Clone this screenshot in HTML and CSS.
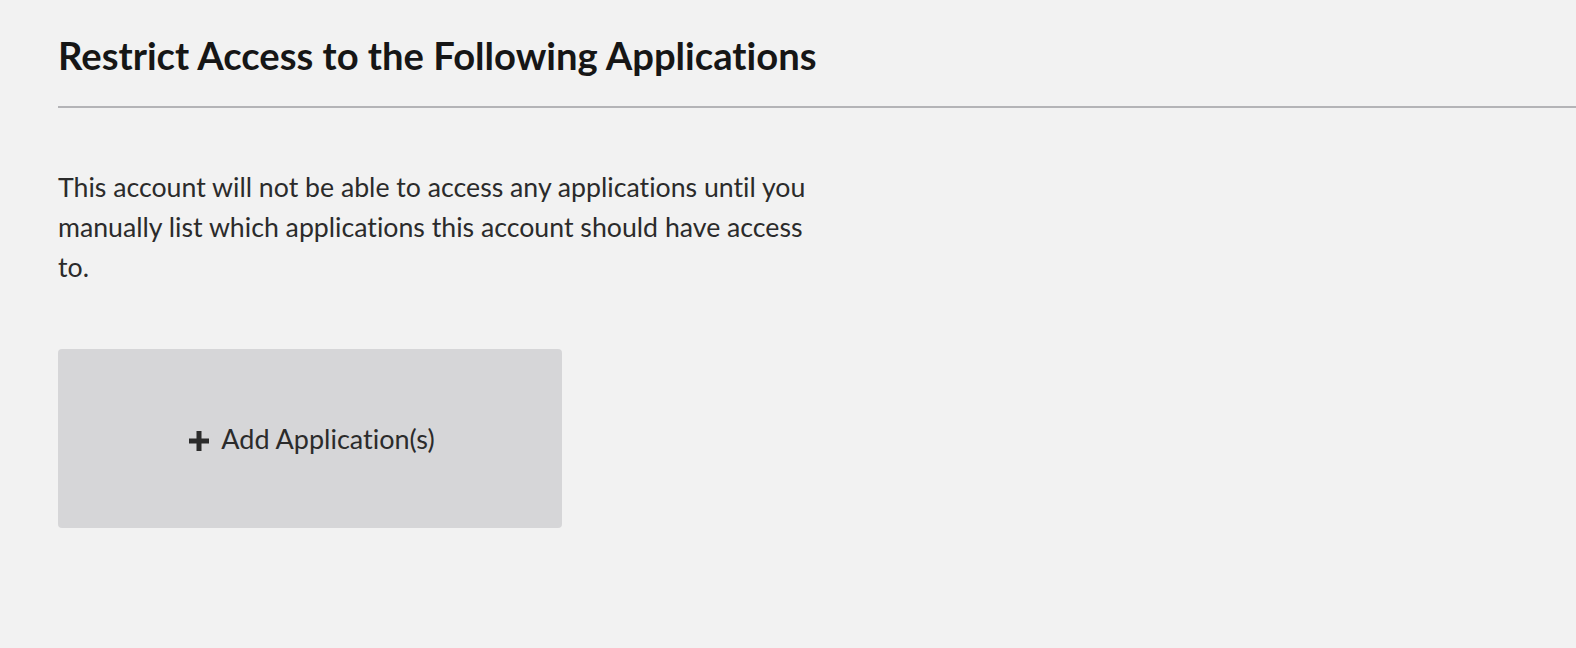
FILE: index.html
```html
<!DOCTYPE html>
<html lang="en">
<head>
<meta charset="utf-8">
<title>Restrict Access</title>
<link rel="stylesheet" href="styles.css">
</head>
<body>
<main class="page">
  <h1 class="title">Restrict Access to the Following Applications</h1>
  <hr class="divider">
  <p class="note">This account will not be able to access any applications until you manually list which applications this account should have access to.</p>
  <button class="add-btn" type="button">
    <svg class="plus" width="20" height="20" viewBox="0 0 20 20" aria-hidden="true"><path d="M7.5 0h5v7.5H20v5h-7.5V20h-5v-7.5H0v-5h7.5z" fill="#2b2b2b"/></svg>
    <span>Add Application(s)</span>
  </button>
</main>
</body>
</html>
```
FILE: styles.css
```css
html, body {
  margin: 0;
  padding: 0;
  background: #f2f2f2;
}
body {
  font-family: Lato, "Noto Sans", sans-serif;
  font-variant-ligatures: none;
  color: #2b2b2b;
}
.page {
  padding: 31px 0 0 58px;
}
.title {
  margin: 0 0 27px;
  font-size: 38.2px;
  line-height: 48px;
  font-weight: 700;
  color: #161616;
}
.divider {
  margin: 0;
  border: 0;
  height: 2px;
  background: #b4b4b7;
}
.note {
  margin: 59px 0 0;
  max-width: 775px;
  font-size: 26.7px;
  line-height: 40px;
  color: #2b2b2b;
}
.add-btn {
  margin-top: 62px;
  width: 504px;
  height: 179px;
  border: 0;
  border-radius: 4px;
  background: #d6d6d8;
  display: flex;
  align-items: center;
  justify-content: center;
  gap: 12px;
  font-family: inherit;
  font-variant-ligatures: none;
  font-size: 27px;
  color: #2b2b2b;
  padding: 0 0 0 4px;
}
.plus {
  width: 20px;
  height: 20px;
  margin-top: 5px;
}
```
